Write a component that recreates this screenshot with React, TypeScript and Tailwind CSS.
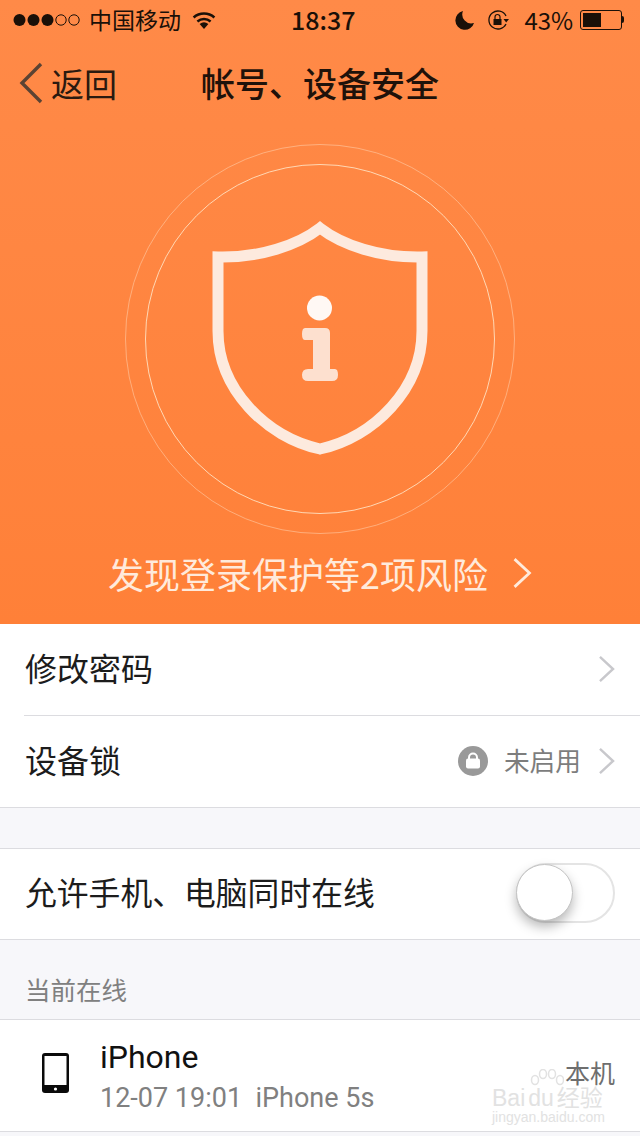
const ChevronRight = ({ className }: { className: string }) => (
  <svg viewBox="0 0 18 30" className={className} fill="none" stroke="currentColor" strokeWidth="2.6">
    <path d="M2 2 L16 15 L2 28" />
  </svg>
);

function StatusBar() {
  return (
    <div className="flex h-[41px] items-center pb-[2px] text-[#1a1008]">
      <svg viewBox="0 0 68 14" className="ml-[13px] h-[14px] w-[68px]">
        <circle cx="6.5" cy="7" r="6" fill="#1a1008" />
        <circle cx="20.5" cy="7" r="6" fill="#1a1008" />
        <circle cx="34.5" cy="7" r="6" fill="#1a1008" />
        <circle cx="48" cy="7" r="5.2" fill="none" stroke="#1a1008" strokeWidth="1" />
        <circle cx="61" cy="7" r="5.2" fill="none" stroke="#1a1008" strokeWidth="1" />
      </svg>
      <span className="ml-[8px] text-[23px] leading-none">中国移动</span>
      <svg viewBox="0 0 26 18" className="ml-[10px] h-[18px] w-[26px]">
        <path d="M13 18 L8.6 13 A7 7 0 0 1 17.4 13 Z" fill="#1a1008" />
        <path d="M6.4 10.4 A10.5 10.5 0 0 1 19.6 10.4" fill="none" stroke="#1a1008" strokeWidth="2.6" />
        <path d="M2.6 6.4 A16 16 0 0 1 23.4 6.4" fill="none" stroke="#1a1008" strokeWidth="2.6" />
      </svg>
      <span className="ml-[74px] text-[25px] leading-none font-medium">18:37</span>
      <svg viewBox="0 0 20 20" className="ml-[100px] h-[20px] w-[20px]">
        <path d="M8 1 A9.5 9.5 0 1 0 19 13 A9 9 0 0 1 8 1 Z" fill="#1a1008" />
      </svg>
      <svg viewBox="0 0 22 20" className="ml-[12px] h-[20px] w-[22px]" fill="none" stroke="#1a1008">
        <path d="M19 6 A9 9 0 1 0 19 14" strokeWidth="1.3" />
        <path d="M16.5 9 L22 9 L19.2 12.5 Z" fill="#1a1008" stroke="none" />
        <rect x="6.5" y="9" width="8" height="6" fill="#1a1008" stroke="none" />
        <path d="M8 9 V7 A2.5 2.5 0 0 1 13 7 V9" strokeWidth="1.2" />
      </svg>
      <span className="ml-[15px] text-[24px] leading-none">43%</span>
      <div className="ml-[7px] flex items-center">
        <div className="h-[20px] w-[42px] rounded-[3px] border border-[#1a1008] p-[2px]">
          <div className="h-full w-[18px] bg-[#1a1008]" />
        </div>
        <div className="h-[7px] w-[2px] rounded-r-sm bg-[#1a1008]" />
      </div>
    </div>
  );
}

function NavBar() {
  return (
    <div className="flex h-[86px] items-center pb-[2px]">
      <svg viewBox="0 0 24 42" className="ml-[19px] h-[42px] w-[24px] text-[#5b4333]" fill="none" stroke="currentColor" strokeWidth="3.4">
        <path d="M22 2 L3 21 L22 40" />
      </svg>
      <span className="ml-[8px] text-[33px] leading-none text-[#2a1a10]">返回</span>
      <span className="ml-[84px] text-[34px] leading-none font-medium text-[#1f120a]">帐号、设备安全</span>
    </div>
  );
}

function ShieldArt() {
  return (
    <svg viewBox="0 0 400 400" className="mx-auto mt-[12px] h-[400px] w-[400px]">
      <circle cx="200" cy="200" r="194.5" fill="none" stroke="#ffd2ae" strokeOpacity="0.55" strokeWidth="1" />
      <circle cx="200" cy="200" r="174.5" fill="none" stroke="#ffe0c0" strokeOpacity="0.9" strokeWidth="1" />
      <path
        d="M200 89 C178 106 140 119 98 118 L98 192 C98 250 146 298 200 310 C254 298 302 250 302 192 L302 118 C260 119 222 106 200 89 Z"
        fill="none"
        stroke="#fdeade"
        strokeWidth="11"
      />
      <circle cx="199.5" cy="169" r="12.5" fill="#fff8f4" />
      <path
        d="M185 189 H205 Q210 189 210 194 V230 H215 Q218 230 218 236 Q218 242 212 242 H188 Q182 242 182 236 Q182 230 188 230 H193 V201 H185 Q182 201 182 195 Q182 189 185 189 Z"
        fill="#fde0cf"
      />
    </svg>
  );
}

function Row({ label, right }: { label: string; right?: React.ReactNode }) {
  return (
    <div className="flex h-[91px] items-center bg-white pb-[1px] pl-[25px] pr-[25px]">
      <span className="mb-[4px] flex-1 text-[32px] leading-none text-[#1c1c1c]">{label}</span>
      {right}
      <ChevronRight className="ml-[17px] h-[28px] w-[17px] text-[#c8c8cc]" />
    </div>
  );
}

export default function App() {
  return (
    <div className="relative h-[1136px] w-[640px] overflow-hidden bg-[#f7f7fa] font-['Roboto','Noto_Sans_CJK_SC',sans-serif]">
      <header className="h-[624px] bg-gradient-to-b from-[#ff8a48] to-[#ff8038] font-['Noto_Sans_CJK_SC','Roboto',sans-serif]">
        <StatusBar />
        <NavBar />
        <ShieldArt />
        <div className="mt-[16px] flex items-center pl-[108px]">
          <span className="text-[36px] leading-none text-[#ffeadb]">发现登录保护等2项风险</span>
          <ChevronRight className="ml-[24px] h-[32px] w-[20px] text-[#ffeadb]" />
        </div>
      </header>

      <div className="font-['Noto_Sans_CJK_SC','Roboto',sans-serif]">
        <div className="bg-white">
          <Row label="修改密码" />
          <div className="ml-[24px] h-px bg-[#dcdce0]" />
          <Row
            label="设备锁"
            right={
              <div className="flex items-center">
                <div className="flex h-[30px] w-[30px] items-center justify-center rounded-full bg-[#999999]">
                  <svg viewBox="0 0 18 18" className="h-[18px] w-[18px]">
                    <path d="M5 7 V5.5 A4 4 0 0 1 13 5.5 V7" fill="none" stroke="#ffffff" strokeWidth="2" />
                    <rect x="2" y="6.5" width="14" height="10" rx="2" fill="#ffffff" />
                  </svg>
                </div>
                <span className="mb-[2px] ml-[16px] text-[25.7px] leading-none text-[#7d7d7d]">未启用</span>
              </div>
            }
          />
        </div>
        <div className="h-[42px] border-y border-[#dcdce0] bg-[#f7f7fa]" />
        <div className="flex h-[90px] items-center justify-between bg-white pb-[2px] pl-[25px] pr-[25px]">
          <span className="mb-[2px] text-[31.8px] leading-none text-[#1c1c1c]">允许手机、电脑同时在线</span>
          <div className="relative h-[60px] w-[99px] rounded-full border-2 border-[#e4e4e4] bg-white">
            <div className="absolute left-[-2px] top-[-1px] h-[57px] w-[57px] rounded-full border border-[#c4c4c4] bg-white shadow-[0_6px_12px_rgba(0,0,0,0.28)]" />
          </div>
        </div>
        <div className="flex h-[81px] items-center border-y border-[#dcdce0] bg-[#f7f7fa] pl-[25px] pt-[18px]">
          <span className="text-[25.5px] leading-none text-[#808080]">当前在线</span>
        </div>
        <div className="flex h-[112px] items-center border-b border-[#dcdce0] bg-white pl-[42px] pr-[25px]">
          <svg viewBox="0 0 27 40" className="mb-[6px] h-[40px] w-[27px]">
            <rect x="0" y="0" width="27" height="40" rx="3" fill="#0a0a0a" />
            <rect x="2.5" y="3" width="22" height="29" fill="#ffffff" />
            <circle cx="13.5" cy="36" r="1.6" fill="#ffffff" />
          </svg>
          <div className="ml-[31px] flex-1">
            <div className="font-['Roboto','Noto_Sans_CJK_SC',sans-serif] text-[32px] leading-[36px] text-[#111111]">iPhone</div>
            <div className="mt-[8px] whitespace-pre font-['Roboto','Noto_Sans_CJK_SC',sans-serif] text-[27px] leading-[30px] text-[#808080]">12-07 19:01  iPhone 5s</div>
          </div>
          <span className="mb-[6px] text-[25px] leading-none text-[#6e6e6e]">本机</span>
        </div>
      </div>

      <div className="absolute left-[492px] top-[1087px] w-[116px] font-['Liberation_Sans','Noto_Sans_CJK_SC',sans-serif] text-[#e2e2e2]">
        <svg viewBox="0 0 34 18" className="absolute left-[38px] top-[-18px] h-[18px] w-[34px]" fill="none" stroke="#e2e2e2" strokeWidth="1.5">
          <ellipse cx="5" cy="11" rx="3.5" ry="4.5" />
          <ellipse cx="13" cy="5" rx="3.5" ry="4.5" />
          <ellipse cx="22" cy="5" rx="3.5" ry="4.5" />
          <ellipse cx="30" cy="11" rx="3.5" ry="4.5" />
        </svg>
        <div className="whitespace-nowrap text-[23px] leading-none">Bai<span className="mx-[3px]">du</span>经验</div>
        <div className="whitespace-nowrap text-[14px] leading-none">jingyan.baidu.com</div>
      </div>
    </div>
  );
}
